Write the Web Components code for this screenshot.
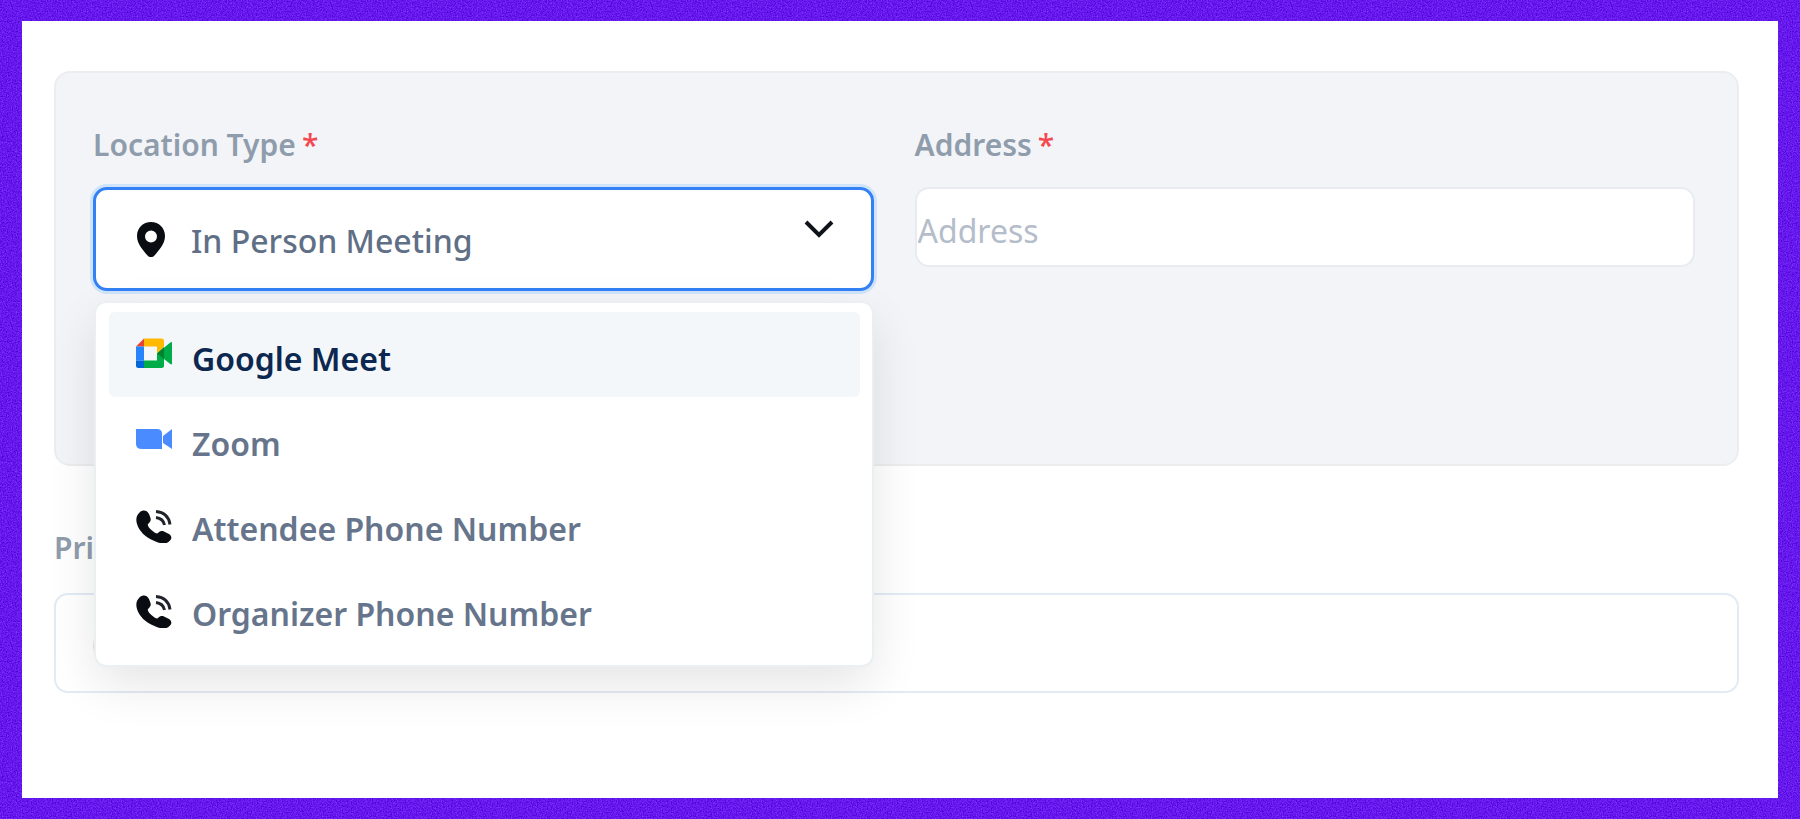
<!DOCTYPE html>
<html lang="en">
<head>
<meta charset="utf-8">
<title>Meeting location</title>
<style>
  body { margin: 0; font-family: "Noto Sans", "Open Sans", sans-serif; color: #5f6f86; }
</style>
</head>
<body>
<page-frame>
  <location-panel>
    <form-field label="Location Type" required>
      <location-select></location-select>
    </form-field>
    <form-field label="Address" required>
      <text-box name="Address" placeholder="Address"></text-box>
    </form-field>
  </location-panel>
  <form-field label="Price" spacing="wide">
    <text-box name="Price" placeholder="0" size="large"></text-box>
  </form-field>
</page-frame>

<template id="page-frame">
  <style>
    :host { display: block; position: relative; box-sizing: border-box; min-height: 100vh; padding: 21px 22px; background: #6412ec; }
    .grain { position: absolute; inset: 0; width: 100%; height: 100%; }
    main { position: relative; box-sizing: border-box; min-height: calc(100vh - 42px); padding: 50px 39px 50px 32px; background: #fff; display: flex; flex-direction: column; gap: 62px; }
  </style>
  <svg class="grain" aria-hidden="true">
    <filter id="n" x="0" y="0" width="100%" height="100%" color-interpolation-filters="sRGB">
      <feTurbulence type="fractalNoise" baseFrequency="0.8" numOctaves="3" seed="4"/>
      <feColorMatrix values="0.3 0 0 0 0.25  0.35 0 0 0 -0.08  0.25 0 0 0 0.8  0 0 0 0 1"/>
    </filter>
    <rect width="100%" height="100%" filter="url(#n)"/>
  </svg>
  <main><slot></slot></main>
</template>

<template id="location-panel">
  <style>
    :host { display: grid; grid-template-columns: 1fr 1fr; column-gap: 41px; align-items: start; padding: 52px 42px 173px 37px; border: 2px solid #ebedef; border-radius: 16px; background: #f2f4f8; }
  </style>
  <slot></slot>
</template>

<template id="form-field">
  <style>
    :host { display: flex; flex-direction: column; gap: 22px; min-width: 0; }
    :host([spacing="wide"]) { gap: 25px; }
    .label { font-size: 30px; line-height: 40px; font-weight: 600; color: #8f9cac; display: flex; gap: 6px; }
    .star { color: #f6474f; font-weight: 500; }
  </style>
  <div class="label"><span class="name"></span></div>
  <slot></slot>
</template>

<template id="text-box">
  <style>
    :host { display: block; }
    input { display: block; box-sizing: border-box; width: 100%; height: 80px; margin: 0; padding: 6px 1px 0; border: 2px solid #e8ecf1; border-radius: 14px; background: #fff; font: 400 32px "Noto Sans", "Open Sans", sans-serif; color: #5f6f86; outline: none; }
    input::placeholder { color: #b4bdc9; opacity: 1; }
    :host([size="large"]) input { height: 100px; padding: 4px 36px 0; border-color: #e2eaf4; }
  </style>
  <input type="text">
</template>

<template id="location-select">
  <style>
    :host { display: block; position: relative; }
    .control { display: grid; align-items: center; }
    .control > * { grid-area: 1 / 1; }
    select { appearance: none; box-sizing: border-box; width: 100%; height: 104px; margin: 0; padding: 2px 80px 0 95px; border: 3px solid #3381f5; border-radius: 14px; background: #fff; box-shadow: 0 0 0 3px #cfe3fb; font: 500 32px "Noto Sans", "Open Sans", sans-serif; color: #5f6f86; outline: none; }
    .control svg { z-index: 1; pointer-events: none; }
    .pin { margin-left: 44px; }
    .chevron { justify-self: end; margin: 0 40px 18px 0; }
    .menu { position: absolute; z-index: 2; top: calc(100% + 12px); left: 3px; right: 2px; padding: 9px 12px 13px 13px; border-radius: 10px; background: #fff; box-shadow: 0 0 0 2px #eaeff2, 0 18px 50px rgba(0,0,0,.11); }
  </style>
  <div class="control">
    <select aria-label="Location Type">
      <option>In Person Meeting</option>
      <option>Google Meet</option>
      <option>Zoom</option>
      <option>Attendee Phone Number</option>
      <option>Organizer Phone Number</option>
    </select>
    <svg class="pin" width="28" height="35" viewBox="0 0 28 35"><path fill="#090d12" fill-rule="evenodd" d="M14 0C6 0 0 6 0 14c0 8 6 14 10.500 19.500q3.500 3.500 7 0C22 28 28 22 28 14 28 6 22 0 14 0zm0 8.500a6 6 0 1 1 0 12 6 6 0 0 1 0-12z"/></svg>
    <svg class="chevron" width="30" height="20" viewBox="0 0 30 20"><path d="M2 2l13 13L28 2" fill="none" stroke="#10131a" stroke-width="4"/></svg>
  </div>
  <div class="menu" role="listbox" aria-label="Location Type">
    <menu-option icon="meet" active>Google Meet</menu-option>
    <menu-option icon="zoom">Zoom</menu-option>
    <menu-option icon="phone">Attendee Phone Number</menu-option>
    <menu-option icon="phone">Organizer Phone Number</menu-option>
  </div>
</template>

<template id="menu-option">
  <style>
    :host { display: block; }
    button { display: flex; align-items: center; gap: 20px; width: 100%; height: 85px; margin: 0; padding: 0 27px; border: 0; border-radius: 6px; background: none; text-align: left; font: 600 32px/44px "Noto Sans", "Open Sans", sans-serif; color: #66758b; }
    svg { flex: none; }
    .text { padding-top: 9px; }
    :host([active]) button { background: #f3f7fa; color: #0c2850; }
  </style>
  <button type="button" role="option"><svg width="36" height="36" viewBox="0 0 36 36" aria-hidden="true"></svg><span class="text"><slot></slot></span></button>
</template>

<script>
  const icons = {
    meet: '<path fill="#e94235" d="M0 9.500L8 1.500v8z"/><path fill="#ffba00" d="M8 1.500h17.500Q28 1.500 28 4v5.500l-7 7v-7H8z"/><path fill="#2684fc" d="M0 9.500h8v14H0z"/><path fill="#0066da" d="M0 23.500h8V31H2.500Q0 31 0 28.500z"/><path fill="#00ac47" d="M21 16.500l13.300-11Q36 4.500 36 6v20.500q0 1.500-1.700.5L28 22v6.500q0 2.500-2.500 2.500H8v-7.500h13z"/><path fill="#00832d" d="M21 16.500L28 10v12z"/>',
    zoom: '<path fill="#4a8cff" d="M0 7h21q5 0 5 5v15H6q-6 0-6-5zM27 14l9-7v20l-9-6z"/>',
    phone: '<path fill="#090d12" d="M4 5C7 2.500 11 3 13 7l1.500 4c.8 2.500-.5 4-2.500 6-.8 1 1 4 4 6.500s5 3.500 6 2.500c2-2 4-2.500 6-1.500l5 2.500c3 2 3 5 .5 7-3 3.500-9 3-15 0C9 30.500 3 23.500 1 17-.5 12 .5 8 4 5z"/><path d="M20 4.500c8 .5 13 5.500 14 13M20 10.500c4.500.5 7.500 3 8.500 7.500" fill="none" stroke="#20242a" stroke-width="3"/>'
  };

  class Base extends HTMLElement {
    constructor() {
      super();
      this.attachShadow({ mode: 'open' })
        .append(document.getElementById(this.localName).content.cloneNode(true));
    }
    $(selector) { return this.shadowRoot.querySelector(selector); }
  }

  customElements.define('page-frame', class extends Base {});
  customElements.define('location-panel', class extends Base {});
  customElements.define('form-field', class extends Base {
    connectedCallback() {
      this.$('.name').textContent = this.getAttribute('label');
      if (this.hasAttribute('required')) {
        const star = document.createElement('span');
        star.className = 'star';
        star.textContent = '*';
        this.$('.label').append(star);
      }
    }
  });
  customElements.define('text-box', class extends Base {
    connectedCallback() {
      const input = this.$('input');
      input.placeholder = this.getAttribute('placeholder');
      input.setAttribute('aria-label', this.getAttribute('name'));
    }
  });
  customElements.define('menu-option', class extends Base {
    connectedCallback() {
      this.$('svg').innerHTML = icons[this.getAttribute('icon')];
      this.$('button').setAttribute('aria-selected', this.hasAttribute('active'));
    }
  });
  customElements.define('location-select', class extends Base {});
</script>
</body>
</html>
